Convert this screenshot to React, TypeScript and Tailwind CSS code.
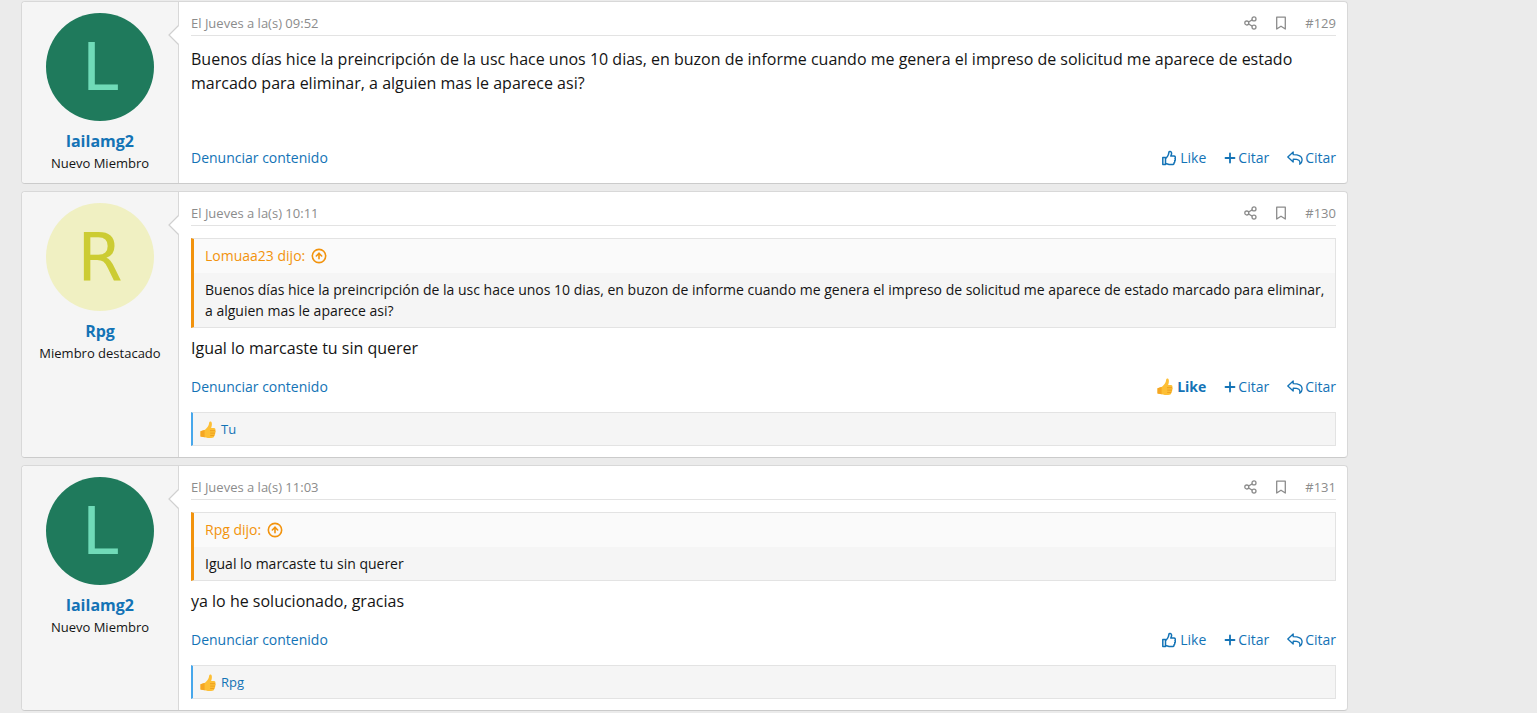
import { useEffect } from 'react';
import { CircleArrowUp } from 'lucide-react';

interface Quote {
  author: string;
  text: string;
}

interface Post {
  id: number;
  user: string;
  title: string;
  date: string;
  text: string;
  quote?: Quote;
  liked?: boolean;
  reactions?: string;
}

const QUESTION =
  'Buenos días hice la preincripción de la usc hace unos 10 dias, en buzon de informe cuando me genera el impreso de solicitud me aparece de estado marcado para eliminar, a alguien mas le aparece asi?';

const posts: Post[] = [
  { id: 129, user: 'lailamg2', title: 'Nuevo Miembro', date: 'El Jueves a la(s) 09:52', text: QUESTION },
  {
    id: 130,
    user: 'Rpg',
    title: 'Miembro destacado',
    date: 'El Jueves a la(s) 10:11',
    text: 'Igual lo marcaste tu sin querer',
    quote: { author: 'Lomuaa23', text: QUESTION },
    liked: true,
    reactions: 'Tu',
  },
  {
    id: 131,
    user: 'lailamg2',
    title: 'Nuevo Miembro',
    date: 'El Jueves a la(s) 11:03',
    text: 'ya lo he solucionado, gracias',
    quote: { author: 'Rpg', text: 'Igual lo marcaste tu sin querer' },
    reactions: 'Rpg',
  },
];

function ShareIcon() {
  return (
    <svg viewBox="0 0 13 14" className="h-[14px] w-[13px]" fill="none" stroke="currentColor" strokeWidth="1.3" aria-hidden="true">
      <circle cx="2.8" cy="7" r="2" />
      <circle cx="10" cy="2.9" r="2" />
      <circle cx="10" cy="11.1" r="2" />
      <path d="M4.6 6 8.2 3.9M4.6 8l3.6 2.1" />
    </svg>
  );
}

function BookmarkIcon() {
  return (
    <svg viewBox="0 0 10 14" className="h-[14px] w-[10px]" fill="none" stroke="currentColor" strokeWidth="1.3" strokeLinejoin="round" aria-hidden="true">
      <path d="M0.7 1.2h8.6v11.8L5 10.2 0.7 13Z" />
    </svg>
  );
}

function PlusIcon() {
  return (
    <svg viewBox="0 0 12 12" className="h-3 w-3 shrink-0" fill="none" stroke="currentColor" strokeWidth="1.8" strokeLinecap="round" aria-hidden="true">
      <path d="M6 1.5v9M1.5 6h9" />
    </svg>
  );
}

function ThumbEmoji() {
  return (
    <svg viewBox="0 0 16 18" className="h-[18px] w-4 shrink-0" aria-hidden="true">
      <path d="M0.5 10.2 5 8.8C6.8 7.4 8.2 5.6 8.8 3.6L9.2 1.4C9.6 0.2 11.4 0.3 11.8 2c0.3 1.6-0.1 3.6-0.7 5.1h2.8c1.6 0 2 1.6 1.2 2.5 0.9 0.7 0.8 2-0.2 2.5 0.6 0.8 0.2 2-0.7 2.4 0.3 1.1-0.4 2.1-1.7 2.2-2.3 0.3-4.6 0.3-6.5-0.3L0.5 15.6Z" fill="#fdbf35" />
      <path d="M0.5 10.2 4.6 9v7.2L0.5 15.6Z" fill="#f5a623" />
      <path d="M10.4 9.7h4.6M10.6 12.1h4.2M10.6 14.4h3.5" stroke="#e59012" strokeWidth="0.7" fill="none" strokeLinecap="round" />
    </svg>
  );
}

function ThumbIcon() {
  return (
    <svg viewBox="1 0 14 16" className="h-4 w-3.5 shrink-0" fill="none" stroke="currentColor" strokeWidth="1.5" strokeLinejoin="round" aria-hidden="true">
      <path d="M1.8 7.6h2.7v6.8H1.8Z" />
      <path d="M4.6 8.4C6 7.2 7 6 7.4 4.6L8 2c.2-.9 2.4-.9 2.6 1 .1 1.2-.4 2.2-.8 3.1h3.1c1.5 0 1.9 1.5 1.1 2.4.6.8.4 1.7-.3 2.2.3.8 0 1.6-.6 2 .1 1.2-.7 1.9-2 1.9H9.2c-1.7 0-2.8-.8-4.6-1.2" />
    </svg>
  );
}

function ReplyIcon() {
  return (
    <svg viewBox="0 0 16 16" className="h-4 w-4 shrink-0" fill="none" stroke="currentColor" strokeWidth="1.3" strokeLinejoin="round" aria-hidden="true">
      <path d="M0.8 7 6.2 2v2.7c5.2 0 8.9 1.2 8.9 5.2 0 1.8-1 3.3-2.4 4.3.9-3.6-1-5-6.5-5V12Z" />
    </svg>
  );
}

function UserCell({ user, title }: { user: string; title: string }) {
  const isRpg = user === 'Rpg';
  return (
    <aside className="relative w-[157px] shrink-0 rounded-l border-r border-[#d8d8d8] bg-[#f5f5f5] pt-[11px] text-center">
      <a
        href="#perfil"
        className={`mx-auto flex h-[108px] w-[108px] items-center justify-center rounded-full font-['DejaVu_Sans',sans-serif] text-[65px] leading-none ${
          isRpg ? 'bg-[#f0f0c2] text-[#cccc33]' : 'bg-[#1f7a5c] text-[#70dbb8]'
        }`}
      >
        {user[0].toUpperCase()}
      </a>
      <h4 className="mt-2 text-base leading-6 font-bold text-[#1373b6]">
        <a href="#perfil">{user}</a>
      </h4>
      <h5 className="text-[13px] leading-5">{title}</h5>
      {/* Arrow pointing at the user cell */}
      <svg viewBox="0 0 11 20" className="absolute top-[23px] -right-px h-5 w-[11px]" aria-hidden="true">
        <path d="M11 0.5 1 10l10 9.5Z" fill="#fff" />
        <path d="M10.5 0.5 1 10l9.5 9.5" fill="none" stroke="#d0d0d0" strokeWidth="1.2" />
      </svg>
    </aside>
  );
}

function QuoteBlock({ author, text }: Quote) {
  return (
    <blockquote className="mb-2 border border-l-[3px] border-[#e3e3e3] border-l-[#f2930d] bg-[#f5f5f5] text-sm">
      <a href="#cita" className="flex h-[34px] items-center gap-1.5 bg-[#fafafa] px-[11px] text-[#f2930d]">
        {author} dijo:
        <CircleArrowUp size={16} strokeWidth={2.4} />
      </a>
      <p className="py-1.5 pr-1 pl-[11px] leading-[21px]">{text}</p>
    </blockquote>
  );
}

function PostCard({ post }: { post: Post }) {
  return (
    <article className="flex rounded border border-[#d8d8d8] border-b-[#cbcbcb] bg-white">
      <UserCell user={post.user} title={post.title} />
      <div className={`min-w-0 flex-1 pr-[11px] pl-3 ${post.reactions ? 'pb-[11px]' : 'pb-[15px]'}`}>
        <header className="flex items-center border-b border-[#e3e3e3] pt-[11px] pb-0.5 text-[13px] leading-5 text-[#8c8c8c]">
          <a href="#post">{post.date}</a>
          <div className="ml-auto flex items-center gap-[19px]">
            <a href="#compartir" aria-label="Compartir">
              <ShareIcon />
            </a>
            <a href="#guardar" aria-label="Guardar">
              <BookmarkIcon />
            </a>
            <a href="#post">#{post.id}</a>
          </div>
        </header>
        <div className={`text-base leading-6 ${post.quote ? 'pt-3' : 'min-h-[95px] pt-[11px]'}`}>
          {post.quote && <QuoteBlock {...post.quote} />}
          <p>{post.text}</p>
        </div>
        <footer className="mt-4 flex h-[21px] items-center text-sm text-[#1373b6]">
          <a href="#denunciar">Denunciar contenido</a>
          <div className="ml-auto flex items-center gap-[18px]">
            <button type="button" className={`flex items-center gap-1 ${post.liked ? 'font-bold' : ''}`}>
              {post.liked ? <ThumbEmoji /> : <ThumbIcon />}
              Like
            </button>
            <button type="button" className="flex items-center gap-0.5">
              <PlusIcon />
              Citar
            </button>
            <button type="button" className="flex items-center gap-0.5">
              <ReplyIcon />
              Citar
            </button>
          </div>
        </footer>
        {post.reactions && (
          <div className="mt-[15px] flex h-[34px] items-center gap-[5px] border border-l-2 border-[#e3e3e3] border-l-[#47a7eb] bg-[#f5f5f5] px-[7px] pt-0.5 text-[13px] text-[#1373b6]">
            <ThumbEmoji />
            <a href="#reacciones">{post.reactions}</a>
          </div>
        )}
      </div>
    </article>
  );
}

export default function App() {
  useEffect(() => {
    document.title = 'Foro';
  }, []);

  return (
    <div className="min-h-screen bg-[#ebebeb] pt-px font-['Open_Sans',sans-serif] text-[#141414]">
      <main className="mr-[189px] ml-[21px] flex flex-col gap-[7px]">
        {posts.map((post) => (
          <PostCard key={post.id} post={post} />
        ))}
      </main>
    </div>
  );
}
